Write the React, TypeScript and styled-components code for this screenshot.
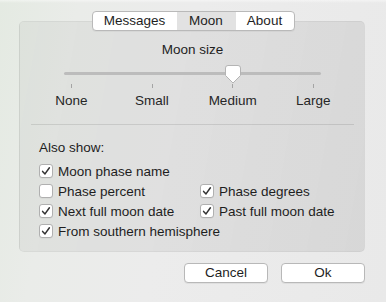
import * as React from 'react';
import styled, { createGlobalStyle } from 'styled-components';

const GlobalStyle = createGlobalStyle`
  html, body {
    margin: 0;
    padding: 0;
    background: #ebebeb;
  }
  * {
    box-sizing: border-box;
  }
`;

const Window = styled.div`
  width: 386px;
  height: 302px;
  padding: 11px 21px 0 19px;
  display: flex;
  flex-direction: column;
  font-family: 'Liberation Sans', Arial, sans-serif;
  font-size: 13.5px;
  color: #1e1e1e;
  background:
    linear-gradient(to bottom, rgba(255, 255, 255, 0.45) 0px, rgba(255, 255, 255, 0) 3px),
    linear-gradient(100deg, #e4eae2 0%, #eaece9 18%, #ececec 45%, #e9e9e9 100%);
  overflow: hidden;
`;

const Tabs = styled.div`
  align-self: center;
  position: relative;
  z-index: 1;
  display: flex;
  height: 20px;
  margin-left: 2px;
  border: 1px solid #b9b9b9;
  border-radius: 4px;
  background: #ffffff;
  overflow: hidden;
  box-shadow: 0 1px 0 rgba(0, 0, 0, 0.04);
`;

const Tab = styled.div<{ $w: number; $active?: boolean }>`
  width: ${p => p.$w}px;
  display: flex;
  align-items: center;
  justify-content: center;
  line-height: 18px;
  background: ${p => (p.$active ? '#e2e2e2' : 'transparent')};
`;

const Panel = styled.div`
  margin-top: -10px;
  width: 346px;
  height: 231px;
  border: 1px solid rgba(0, 0, 0, 0.045);
  border-radius: 5px;
  background: linear-gradient(100deg, rgba(0, 0, 0, 0.035) 0%, rgba(0, 0, 0, 0.06) 60%, rgba(0, 0, 0, 0.075) 100%);
  padding-top: 20px;
  display: flex;
  flex-direction: column;
`;

const Title = styled.div`
  text-align: center;
  line-height: 16px;
  margin-left: 1px;
`;

const Slider = styled.div`
  margin-left: 44px;
  width: 257px;
  margin-top: 14px;
`;

const Track = styled.div`
  position: relative;
  height: 3px;
  border-radius: 2px;
  background: #bcbcbc;
`;

const Thumb = styled.svg`
  position: absolute;
  left: 161px;
  top: -7px;
`;

const Ticks = styled.div`
  display: flex;
  justify-content: space-between;
  padding: 0 7px;
  margin-top: 9px;
`;

const Tick = styled.div`
  width: 1px;
  height: 4px;
  background: #a4a4a4;
`;

const Labels = styled.div`
  display: grid;
  grid-template-columns: repeat(4, 80.67px);
  margin-left: -33px;
  margin-top: 5px;
  line-height: 16px;
  color: #262626;
`;

const Label = styled.div`
  text-align: center;
`;

const Separator = styled.div`
  height: 1px;
  margin: 15px 10px 0 11px;
  background: rgba(0, 0, 0, 0.1);
`;

const SectionTitle = styled.div`
  margin: 15px 0 0 19px;
  line-height: 16px;
`;

const Options = styled.div`
  display: grid;
  grid-template-columns: 161px auto;
  grid-auto-rows: 20px;
  margin: 5px 0 0 19px;
`;

const Option = styled.label<{ $wide?: boolean }>`
  display: flex;
  align-items: center;
  gap: 5px;
  grid-column: ${p => (p.$wide ? '1 / span 2' : 'auto')};
  white-space: nowrap;
`;

const Box = styled.span`
  width: 14px;
  height: 14px;
  display: flex;
  align-items: center;
  justify-content: center;
  border: 1px solid #b0b0b0;
  border-radius: 3px;
  background: #ffffff;
  box-shadow: 0 0.5px 0 rgba(0, 0, 0, 0.06);
`;

const Buttons = styled.div`
  display: flex;
  justify-content: flex-end;
  gap: 13px;
  margin-top: 11px;
`;

const Button = styled.button`
  width: 84px;
  height: 20px;
  padding: 0;
  border: 1px solid #b8b8b8;
  border-radius: 4px;
  background: #ffffff;
  font-family: inherit;
  font-size: 13.5px;
  color: #1e1e1e;
  line-height: 18px;
  box-shadow: 0 1px 0 rgba(0, 0, 0, 0.05);
`;

const Check = () => (
  <svg width="10" height="10" viewBox="0 0 10 10">
    <path d="M1.6 5.4 L4 7.9 L8.4 1.8" fill="none" stroke="#333" strokeWidth="1.5" strokeLinecap="round" strokeLinejoin="round" />
  </svg>
);

const CheckItem = ({ label, checked, wide }: { label: string; checked: boolean; wide?: boolean }) => (
  <Option $wide={wide}>
    <Box>{checked && <Check />}</Box>
    {label}
  </Option>
);

const sizes = ['None', 'Small', 'Medium', 'Large'];

const App = () => {
  return (
    <Window>
      <GlobalStyle />
      <Tabs>
        <Tab $w={84}>Messages</Tab>
        <Tab $w={59} $active>Moon</Tab>
        <Tab $w={58}>About</Tab>
      </Tabs>
      <Panel>
        <Title>Moon size</Title>
        <Slider>
          <Track>
            <Thumb width="16" height="19" viewBox="0 0 16 19">
              <path
                d="M3 0.5 H13 Q15.5 0.5 15.5 3 V10.5 L8 18 L0.5 10.5 V3 Q0.5 0.5 3 0.5 Z"
                fill="#ffffff"
                stroke="#b4b4b4"
                strokeWidth="1"
              />
            </Thumb>
          </Track>
          <Ticks>
            {sizes.map(s => (
              <Tick key={s} />
            ))}
          </Ticks>
          <Labels>
            {sizes.map(s => (
              <Label key={s}>{s}</Label>
            ))}
          </Labels>
        </Slider>
        <Separator />
        <SectionTitle>Also show:</SectionTitle>
        <Options>
          <CheckItem label="Moon phase name" checked wide />
          <CheckItem label="Phase percent" checked={false} />
          <CheckItem label="Phase degrees" checked />
          <CheckItem label="Next full moon date" checked />
          <CheckItem label="Past full moon date" checked />
          <CheckItem label="From southern hemisphere" checked wide />
        </Options>
      </Panel>
      <Buttons>
        <Button>Cancel</Button>
        <Button>Ok</Button>
      </Buttons>
    </Window>
  );
};

export default App;
